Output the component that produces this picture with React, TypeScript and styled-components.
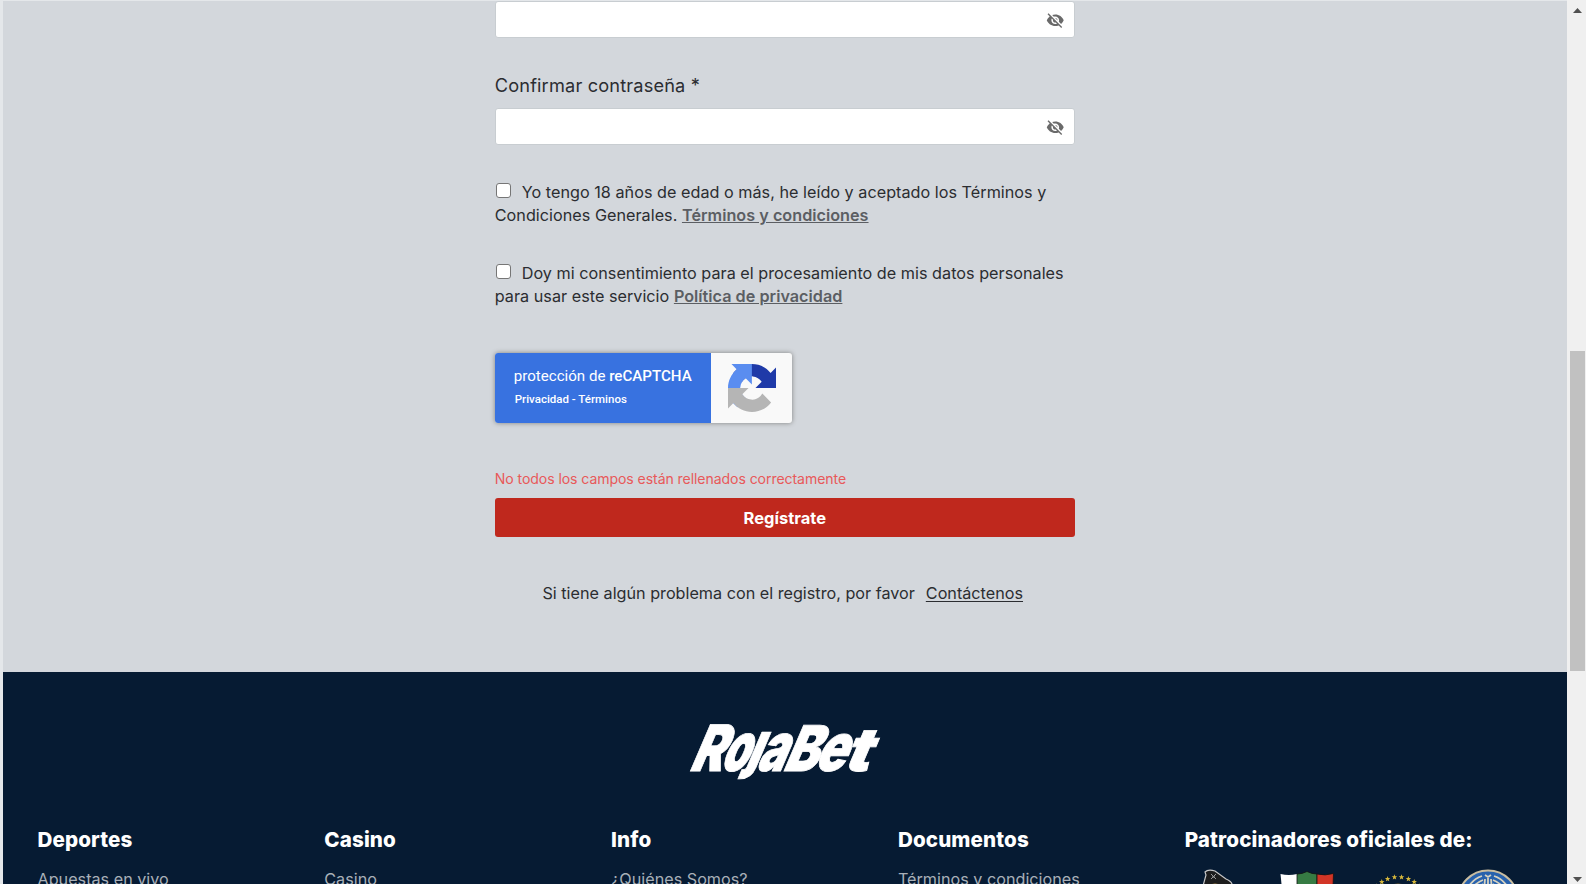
import React from "react";
import styled, { createGlobalStyle } from "styled-components";
import { MdVisibilityOff } from "react-icons/md";

const Global = createGlobalStyle`
  * { box-sizing: border-box; }
  html, body { margin: 0; padding: 0; height: 884px; overflow: hidden; }
  body { background: #d3d7dc; font-family: Inter, sans-serif; color: #2b2d31; }
`;

const Screen = styled.div`
  display: flex;
  width: 1586px;
  height: 884px;
  overflow: hidden;
  background: #e4e7ea;
`;

const Page = styled.div`
  display: flex;
  flex-direction: column;
  width: 1564.5px;
  margin-left: 2.5px;
  padding-top: 1px;
`;

const FormArea = styled.main`
  height: 671px;
  flex: none;
  display: flex;
  justify-content: center;
  background: #d3d7dc;
`;

const Form = styled.form`
  width: 580px;
  display: flex;
  flex-direction: column;
`;

const PasswordBox = styled.div`
  display: flex;
  align-items: center;
  justify-content: flex-end;
  height: 37px;
  flex: none;
  padding: 1px 9px 0 0;
  margin-left: 0.6px;
  background: #fff;
  border: 1px solid #c8cdd1;
  border-radius: 3px;
  color: #6a6a6a;
`;

const Label = styled.label`
  margin: 33px 0 9px;
  height: 28px;
  line-height: 28px;
  font-size: 18.2px;
  letter-spacing: 0.16px;
`;

const Consent = styled.p<{ $top: number }>`
  margin: ${(p) => p.$top}px 0 0;
  height: 47px;
  font-size: 16.2px;
  line-height: 23.4px;
  letter-spacing: 0.02px;
  white-space: nowrap;
`;

const Check = styled.span`
  display: inline-block;
  width: 15px;
  height: 15px;
  margin: 0 11px 0 1px;
  vertical-align: 0;
  background: #fff;
  border: 1px solid #767676;
  border-radius: 3px;
`;

const StrongLink = styled.a`
  font-weight: 600;
  color: #5b5e63;
  text-decoration: underline;
`;

const Captcha = styled.div`
  display: flex;
  width: 297px;
  height: 70px;
  margin-top: 44px;
  margin-left: 0.5px;
  flex: none;
  border-radius: 3px;
  overflow: hidden;
  background: #f9f9f9;
  box-shadow: 0 0 5px #808080;
`;

const CaptchaText = styled.div`
  display: flex;
  flex-direction: column;
  width: 216px;
  padding: 13px 0 0 18.5px;
  background: #3872e0;
  color: #fff;
  font-family: Roboto, sans-serif;
  font-size: 15.1px;
  line-height: 20px;
  white-space: nowrap;

  b { font-weight: 500; }
`;

const CaptchaLinks = styled.span`
  margin: 3px 0 0 1px;
  font-size: 11.5px;
  font-weight: 500;
`;

const CaptchaIcon = styled.div`
  flex: 1;
  display: flex;
  align-items: center;
  justify-content: center;
`;

const ErrorText = styled.div`
  margin-top: 45px;
  height: 22px;
  line-height: 22px;
  font-size: 14.1px;
  letter-spacing: -0.09px;
  color: #e8595a;
`;

const Submit = styled.button`
  margin-top: 8px;
  height: 39px;
  flex: none;
  border: 0;
  border-radius: 3px;
  background: #bf281d;
  color: #fff;
  font: 700 16.5px/40px Inter, sans-serif;
  padding: 0;
`;

const Help = styled.p`
  margin: 43px 0 0;
  padding-right: 4px;
  display: flex;
  justify-content: center;
  gap: 11px;
  line-height: 26px;
  font-size: 16.2px;
  white-space: nowrap;

  a { text-decoration: underline; text-underline-offset: 2px; }
`;

const Footer = styled.footer`
  flex: 1;
  display: flex;
  flex-direction: column;
  align-items: center;
  background: #061b33;
  overflow: hidden;
`;

const Logo = styled.svg`
  display: block;
  flex: none;
  width: 210px;
  height: 70px;
  margin-top: 42px;
  overflow: visible;
`;

const Columns = styled.div`
  display: grid;
  grid-template-columns: repeat(5, 286.8px);
  align-self: flex-start;
  margin: 40px 0 0 35px;
`;

const Column = styled.section`
  display: flex;
  flex-direction: column;
  white-space: nowrap;
`;

const Heading = styled.h3`
  margin: 0;
  font-size: 20.6px;
  line-height: 32px;
  font-weight: 800;
  letter-spacing: 0.12px;
  color: #fff;
`;

const FooterLink = styled.a`
  margin-top: 11px;
  font-size: 16.2px;
  line-height: 24px;
  color: #a9b0b8;
`;

const Badges = styled.svg`
  display: block;
  width: 340px;
  height: 40px;
  margin-top: 8px;
`;

const ScrollTrack = styled.div`
  display: flex;
  flex-direction: column;
  align-items: center;
  width: 19px;
  height: 884px;
  padding: 8px 0 0 1px;
  background: #f0f0f0;
`;

const ScrollThumb = styled.div`
  width: 15px;
  height: 320px;
  margin: 338px 0 206px;
  flex: none;
  background: #c1c1c1;
`;

const Arrow = styled.svg`
  display: block;
  flex: none;
  width: 9px;
  height: 5px;
  fill: #505050;
`;

const columns = [
  ["Deportes", "Apuestas en vivo"],
  ["Casino", "Casino"],
  ["Info", "¿Quiénes Somos?"],
  ["Documentos", "Términos y condiciones"],
];

type Letter = { ch: string; x: number; w: number; size: number };

const letters: Letter[] = [
  { ch: "R", x: 8, w: 33, size: 64 },
  { ch: "o", x: 38.5, w: 27, size: 68 },
  { ch: "a", x: 75, w: 28, size: 68 },
  { ch: "B", x: 101.5, w: 34, size: 63 },
  { ch: "e", x: 132.5, w: 31, size: 67 },
  { ch: "t", x: 161.5, w: 26, size: 60 },
];

const RojaBetLogo = () => (
  <Logo viewBox="0 0 210 70">
    <defs>
      <clipPath id="jclip">
        <rect x="40" y="-39" width="60" height="60" />
      </clipPath>
    </defs>
    <g
      transform="matrix(1 0 -0.43 1 0 56.7)"
      fill="#fff"
      stroke="#fff"
      strokeWidth="0.8"
      fontFamily="Inter, sans-serif"
      fontWeight="900"
    >
      {letters.map((l) => (
        <text
          key={l.x}
          x={l.x}
          y="0"
          fontSize={l.size}
          textLength={l.w}
          lengthAdjust="spacingAndGlyphs"
        >
          {l.ch}
        </text>
      ))}
      <g clipPath="url(#jclip)">
        <text
          x="63"
          y="-4.5"
          fontSize="63"
          textLength="14"
          lengthAdjust="spacingAndGlyphs"
        >
          j
        </text>
      </g>
    </g>
  </Logo>
);

const RecaptchaMark = () => (
  <svg width="48" height="48" viewBox="0 0 64 64">
    <path fill="#1f3aa8" d="M64 31.955l-.033-1.37V4.687l-7.16 7.16C50.905 4.674 41.97.093 31.968.093c-10.4 0-19.645 4.96-25.502 12.64l11.736 11.86a15.55 15.55 0 0 1 4.754-5.334c2.05-1.6 4.952-2.906 8.968-2.906.485 0 .86.057 1.135.163 4.976.393 9.288 3.14 11.828 7.124l-8.307 8.307L64 31.953" />
    <path fill="#5a8df0" d="M31.862.094l-1.37.033H4.594l7.16 7.16C4.58 13.147 0 22.08 0 32.083c0 10.4 4.96 19.645 12.64 25.502L24.5 45.85a15.55 15.55 0 0 1-5.334-4.754c-1.6-2.05-2.906-4.952-2.906-8.968 0-.485.057-.86.163-1.135.393-4.976 3.14-9.288 7.124-11.828l8.307 8.307L31.86.095" />
    <path fill="#b5b5b5" d="M.001 32.045l.033 1.37v25.898l7.16-7.16c5.86 7.173 14.794 11.754 24.797 11.754 10.4 0 19.645-4.96 25.502-12.64l-11.736-11.86a15.55 15.55 0 0 1-4.754 5.334c-2.05 1.6-4.952 2.906-8.968 2.906-.485 0-.86-.057-1.135-.163-4.976-.393-9.288-3.14-11.828-7.124l8.307-8.307c-10.522.04-22.4.066-27.385-.005" />
  </svg>
);

const starPath = (cx: number, cy: number, r: number) =>
  Array.from({ length: 10 }, (_, i) => {
    const a = -Math.PI / 2 + (i * Math.PI) / 5;
    const d = i % 2 ? r * 0.42 : r;
    return `${i ? "L" : "M"}${cx + d * Math.cos(a)} ${cy + d * Math.sin(a)}`;
  }).join("") + "Z";

const SponsorBadges = () => (
  <Badges viewBox="0 0 340 40">
    <path d="M18 22L21 11L20 8Q23 5 30 7L41 15Q48 18 47 22Z" fill="#1d1d1d" stroke="#c8c8c8" strokeWidth="1.2" />
    <path d="M26 10l5 5m0-5l-5 5M27 13h3" stroke="#999" strokeWidth="1" />
    <path d="M21 24q9-9 18 0z" fill="#a98745" />
    <path d="M95.5 10Q104 12 112 10V40H98Q97 24 95.5 10Z" fill="#fff" />
    <path d="M112 10Q117 10 122 7.5Q127 10 132 10V40H112Z" fill="#367b43" stroke="#111" strokeWidth=".8" />
    <path d="M132 10Q140 12 148.5 9.5Q148 28 146 40H132Z" fill="#d23526" stroke="#111" strokeWidth=".8" />
    {[-60, -47, -34, -21, -7, 7, 21, 34, 47, 60].map((deg) => {
      const a = (deg * Math.PI) / 180;
      return <path key={deg} d={starPath(213 + 29 * Math.sin(a), 42 - 29 * Math.cos(a), 2.9)} fill="#d8b93c" />;
    })}
    <path d="M204 22q9-5 18 0z" fill="#7c6630" />
    <circle cx="303" cy="36.5" r="30" fill="#2862ad" stroke="#c9bda0" strokeWidth="2" />
    <g fill="none" stroke="#d6d2c0" strokeWidth="1.8">
      <path d="M281 27Q287 15 297 12M285 27Q290 19 298 16M325 27Q319 15 309 12M321 27Q316 19 308 16M290 27L298 20M316 27L308 20" />
      <path d="M303 27V12M300 11l3 2 3-2M299 27l1-12M307 27l-1-12" />
    </g>
  </Badges>
);

export default function App() {
  return (
    <Screen>
      <Global />
      <Page>
        <FormArea>
          <Form>
            <PasswordBox><MdVisibilityOff size={18.5} /></PasswordBox>
            <Label>Confirmar contraseña *</Label>
            <PasswordBox><MdVisibilityOff size={18.5} /></PasswordBox>
            <Consent $top={36}>
              <Check />Yo tengo 18 años de edad o más, he leído y aceptado los Términos y<br />
              Condiciones Generales. <StrongLink>Términos y condiciones</StrongLink>
            </Consent>
            <Consent $top={34}>
              <Check />Doy mi consentimiento para el procesamiento de mis datos personales<br />
              para usar este servicio <StrongLink>Política de privacidad</StrongLink>
            </Consent>
            <Captcha>
              <CaptchaText>
                <span>protección de <b>reCAPTCHA</b></span>
                <CaptchaLinks>Privacidad - Términos</CaptchaLinks>
              </CaptchaText>
              <CaptchaIcon><RecaptchaMark /></CaptchaIcon>
            </Captcha>
            <ErrorText>No todos los campos están rellenados correctamente</ErrorText>
            <Submit type="button">Regístrate</Submit>
            <Help><span>Si tiene algún problema con el registro, por favor</span><a>Contáctenos</a></Help>
          </Form>
        </FormArea>
        <Footer>
          <RojaBetLogo />
          <Columns>
            {columns.map(([title, link]) => (
              <Column key={title}>
                <Heading>{title}</Heading>
                <FooterLink>{link}</FooterLink>
              </Column>
            ))}
            <Column>
              <Heading>Patrocinadores oficiales de:</Heading>
              <SponsorBadges />
            </Column>
          </Columns>
        </Footer>
      </Page>
      <ScrollTrack>
        <Arrow viewBox="0 0 9 5"><path d="M0 5L4.5 0L9 5Z" /></Arrow>
        <ScrollThumb />
        <Arrow viewBox="0 0 9 5"><path d="M0 0H9L4.5 5Z" /></Arrow>
      </ScrollTrack>
    </Screen>
  );
}
